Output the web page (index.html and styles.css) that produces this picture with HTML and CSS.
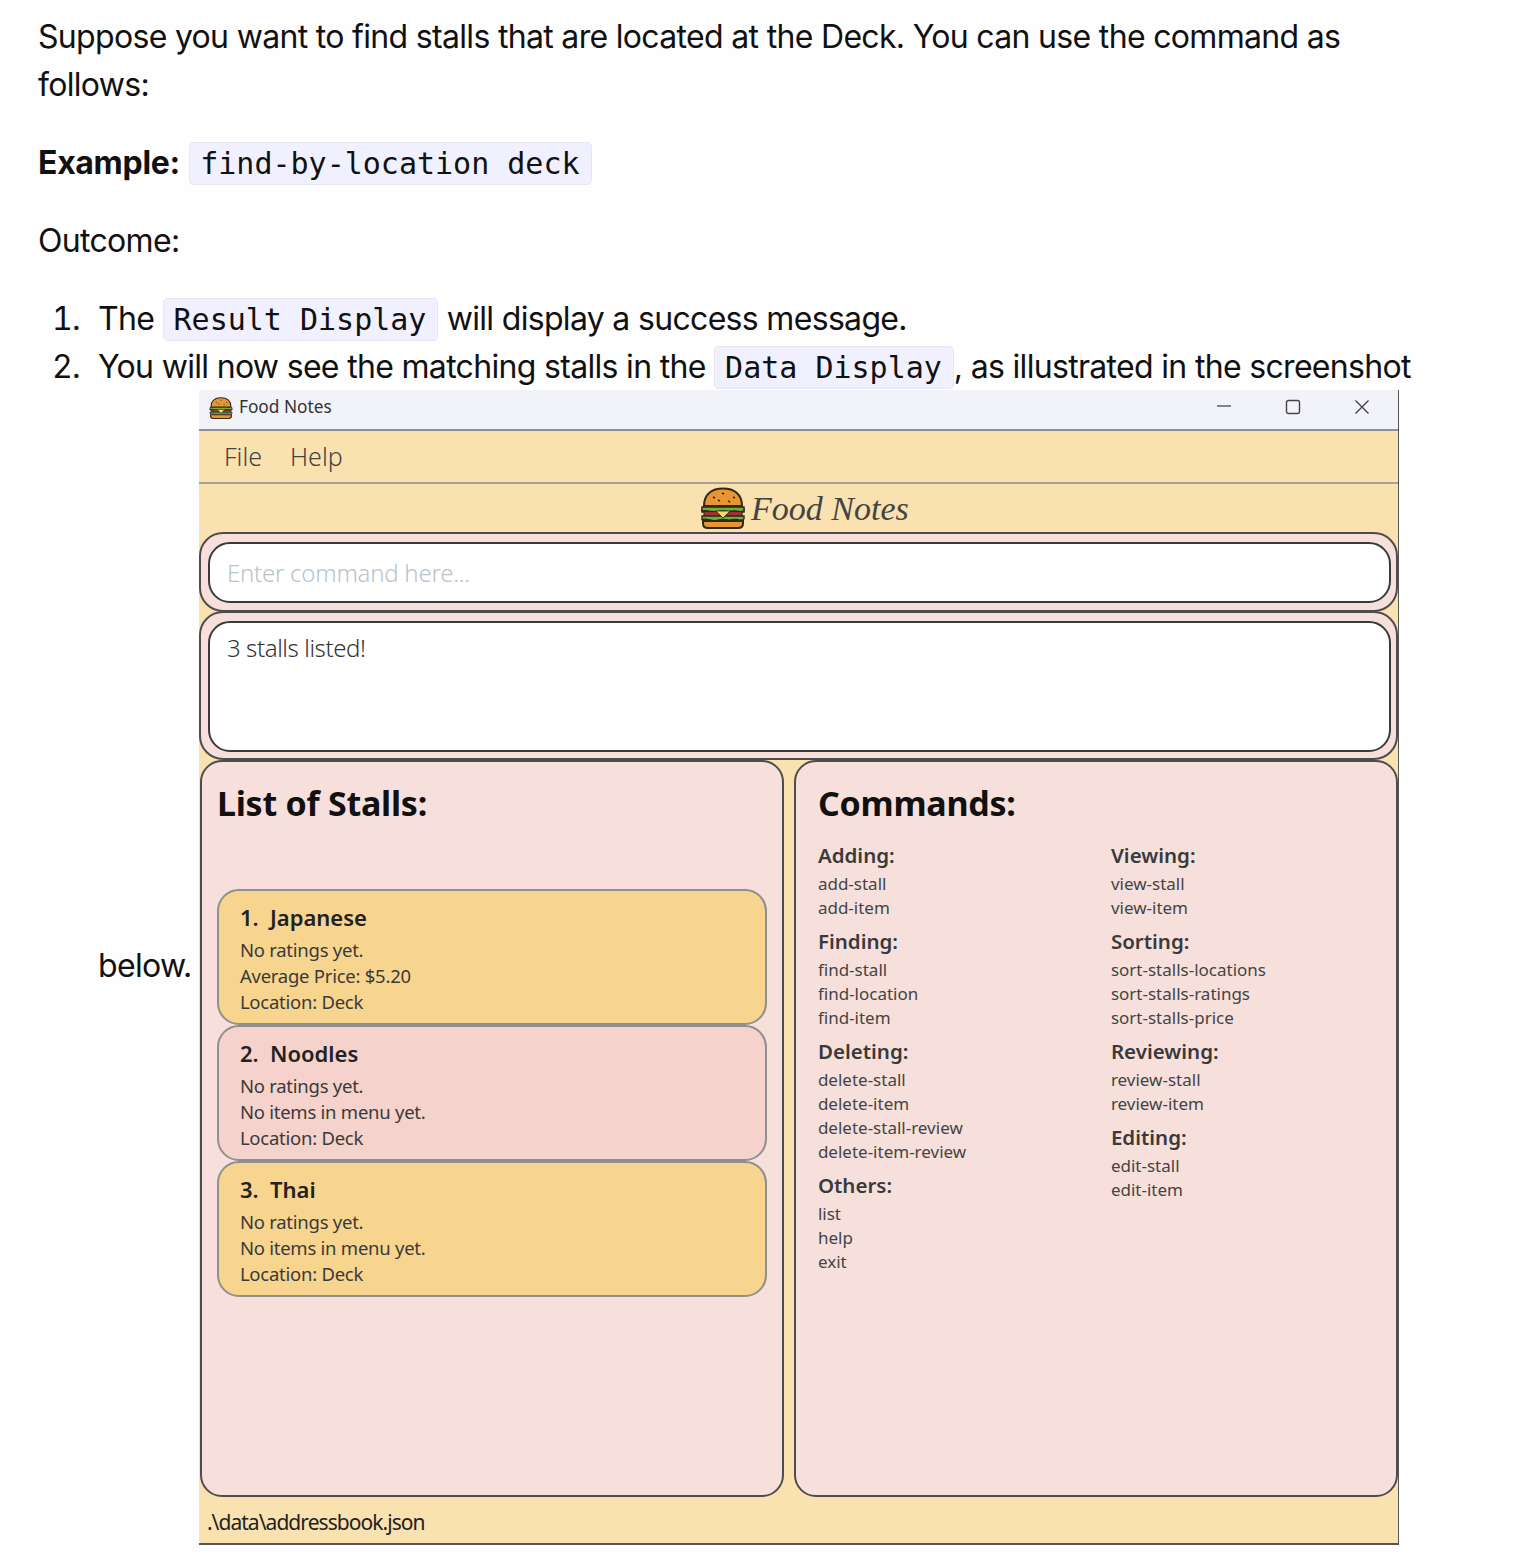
FILE: index.html
```html
<!DOCTYPE html>
<html lang="en">
<head>
<meta charset="utf-8">
<title>Food Notes guide</title>
<link rel="stylesheet" href="styles.css">
</head>
<body>
<svg class="defs" width="0" height="0" aria-hidden="true">
  <symbol id="burger" viewBox="0 0 46 42">
    <path d="M4 19C4 7 12 1.500 23 1.500S42 7 42 19z" fill="#e8962f" stroke="#33261a" stroke-width="2"/>
    <path d="M13 10l2 1M22 6l2 1M33 10l2 1M18 13l2 1M28 14l2 1" stroke="#33261a" stroke-width="1.600"/>
    <path d="M2 22c3-3 5-2 8-1s5 1 8 0 6-1 9 0 5 1 8 0 6-1 9 1v3H2z" fill="#b23338" stroke="#33261a" stroke-width="1.400"/>
    <path d="M2 20h42v4c-3 1.500-5 .5-8 0s-5 1-8 .5-6-1-9 0-6 1-9 0-5-1-8-.5z" fill="#69b23e" stroke="#33261a" stroke-width="1.400"/>
    <rect x="4" y="24.500" width="38" height="5" fill="#a82f36" stroke="#33261a" stroke-width="1.200"/>
    <path d="M2 29h42v3c-3 2-5 1-8 .5s-5 1-8 .5-6-1-9 0-6 1-9 0-5-1-8-.5z" fill="#69b23e" stroke="#33261a" stroke-width="1.400"/>
    <path d="M16 24h14l-7 7z" fill="#f8dc6b" stroke="#33261a" stroke-width=".8"/>
    <path d="M3 34h40v2.500c0 3-2 4.500-5 4.500H8c-3 0-5-1.500-5-4.500z" fill="#e8962f" stroke="#33261a" stroke-width="2"/>
  </symbol>
</svg>
<p class="para">Suppose you want to find stalls that are located at the Deck. You can use the command as follows:</p>
<p class="para"><strong>Example:</strong> <code class="code">find-by-location deck</code></p>
<p class="para">Outcome:</p>
<ol class="steps">
  <li>The <code class="code">Result Display</code> will display a success message.</li>
  <li>You will now see the matching stalls in the <code class="code">Data Display</code>, as illustrated in the screenshot below.
    <div class="window">
      <div class="titlebar">
        <svg class="title-icon"><use href="#burger"/></svg>
        <span class="title-text">Food Notes</span>
        <div class="win-controls">
          <svg class="win-btn" viewBox="0 0 16 16"><path d="M1 7h14" stroke="#555" stroke-width="1.400" fill="none"/></svg>
          <svg class="win-btn" viewBox="0 0 16 16"><rect x="1.500" y="1.500" width="13" height="13" rx="2" stroke="#444" stroke-width="1.400" fill="none"/></svg>
          <svg class="win-btn" viewBox="0 0 16 16"><path d="M1.500 1.500l13 13M14.500 1.500l-13 13" stroke="#444" stroke-width="1.400" fill="none"/></svg>
        </div>
      </div>
      <div class="menubar"><span>File</span><span>Help</span></div>
      <div class="logo-row">
        <svg class="logo-icon"><use href="#burger"/></svg>
        <span class="logo-text">Food Notes</span>
      </div>
      <div class="box box-command"><div class="field field-command">Enter command here...</div></div>
      <div class="box box-result"><div class="field field-result">3 stalls listed!</div></div>
      <div class="panels">
        <section class="panel">
          <h2 class="panel-title">List of Stalls:</h2>
          <div class="cards">
            <article class="card card-odd">
              <h3>1.&nbsp; Japanese</h3>
              <p>No ratings yet.</p><p>Average Price: $5.20</p><p>Location: Deck</p>
            </article>
            <article class="card card-even">
              <h3>2.&nbsp; Noodles</h3>
              <p>No ratings yet.</p><p>No items in menu yet.</p><p>Location: Deck</p>
            </article>
            <article class="card card-odd">
              <h3>3.&nbsp; Thai</h3>
              <p>No ratings yet.</p><p>No items in menu yet.</p><p>Location: Deck</p>
            </article>
          </div>
        </section>
        <section class="panel panel-commands">
          <h2 class="panel-title">Commands:</h2>
          <div class="cmd-grid">
            <div class="cmd-col">
              <div class="cmd-group"><h4>Adding:</h4><p>add-stall</p><p>add-item</p></div>
              <div class="cmd-group"><h4>Finding:</h4><p>find-stall</p><p>find-location</p><p>find-item</p></div>
              <div class="cmd-group"><h4>Deleting:</h4><p>delete-stall</p><p>delete-item</p><p>delete-stall-review</p><p>delete-item-review</p></div>
              <div class="cmd-group"><h4>Others:</h4><p>list</p><p>help</p><p>exit</p></div>
            </div>
            <div class="cmd-col">
              <div class="cmd-group"><h4>Viewing:</h4><p>view-stall</p><p>view-item</p></div>
              <div class="cmd-group"><h4>Sorting:</h4><p>sort-stalls-locations</p><p>sort-stalls-ratings</p><p>sort-stalls-price</p></div>
              <div class="cmd-group"><h4>Reviewing:</h4><p>review-stall</p><p>review-item</p></div>
              <div class="cmd-group"><h4>Editing:</h4><p>edit-stall</p><p>edit-item</p></div>
            </div>
          </div>
        </section>
      </div>
      <div class="statusbar">.\data\addressbook.json</div>
    </div>
  </li>
</ol>
</body>
</html>
```
FILE: styles.css
```css
* { box-sizing: border-box; }
html, body { margin: 0; padding: 0; }
body {
  padding: 13px 100px 0 38px;
  height: 1564px;
  overflow: hidden;
  background: #fefefe;
  color: #111;
  font-family: Inter, "Liberation Sans", sans-serif;
  font-size: 32px;
  line-height: 48px;
  letter-spacing: -0.68px;
}
.defs { position: absolute; }
.para { margin: 0 0 30px; }
.para strong { font-weight: 700; letter-spacing: -0.3px; }
.code {
  font-family: "DejaVu Sans Mono", monospace;
  font-size: 30px;
  line-height: 36px;
  letter-spacing: 0;
  padding: 3px 11px 3px 10px;
  margin: 0 1px;
  background: #f0f0fe;
  border: 1px solid #e7e7f4;
  border-radius: 5px;
}
.steps { margin: 0; padding: 0 0 0 60px; }
.steps .code { margin: 0; }
.steps li::marker { content: counter(list-item) ".\00a0\00a0\200a"; }
.window {
  display: inline-flex;
  flex-direction: column;
  vertical-align: middle;
  width: 1200px;
  height: 1155px;
  margin: -1px 0 0 -1px;
  background: #fae1b0;
  border-right: 1px solid #555;
  border-radius: 0 0 0 6px;
  font-family: "Noto Sans", "Open Sans", sans-serif;
  color: #222;
  line-height: 1.2;
  letter-spacing: 0;
}
.titlebar {
  display: flex;
  align-items: center;
  height: 41px;
  padding: 0 0 4px 10px;
  background: #f2f2f9;
  border-bottom: 2px solid #8f8f96;
  font-size: 17.300px;
  flex: none;
}
.title-icon { width: 24px; height: 22px; }
.title-text { margin-left: 6px; color: #333; }
.win-controls { margin: -2px 0 0 auto; display: flex; gap: 53px; padding-right: 28px; }
.win-btn { width: 16px; height: 16px; display: block; }
.menubar {
  display: flex;
  gap: 28px;
  align-items: center;
  height: 53px;
  padding: 0 0 2px 25px;
  border-bottom: 2px solid #a8a295;
  font-size: 25px;
  font-weight: 300;
  color: #444;
  flex: none;
}
.logo-row {
  display: flex;
  align-items: center;
  justify-content: center;
  gap: 5px;
  height: 48px;
  flex: none;
  padding: 3px 0 0 12px;
}
.logo-icon { width: 46px; height: 42px; margin-top: -3px; }
.logo-text {
  font-family: "Liberation Serif", serif;
  font-style: italic;
  font-size: 34px;
  color: #444;
}
.box {
  background: #f7e0dc;
  border: 2px solid #4d4d4d;
  border-radius: 24px;
  padding: 8px 5px 7px 7px;
  flex: none;
}
.box-command { height: 80px; }
.box-result { height: 149px; margin-top: -1px; padding-bottom: 6px; }
.field {
  height: 100%;
  background: #fff;
  border: 2px solid #3a3a3a;
  border-radius: 22px;
  padding-left: 17px;
  font-size: 24px;
  font-weight: 300;
}
.field-command { display: flex; align-items: center; padding-top: 2px; color: #b9c3c8; letter-spacing: -0.25px; }
.field-result { padding-top: 11px; color: #333; letter-spacing: -0.4px; }
.panels {
  display: grid;
  grid-template-columns: 584px 604px;
  gap: 10px;
  height: 737px;
  padding-left: 1px;
  flex: none;
}
.panel {
  background: #f7e0dc;
  border: 2px solid #4d4d4d;
  border-radius: 22px;
  padding: 18px 15px 0;
}
.panel-commands { padding-left: 22px; }
.panel-title { margin: 0 0 -1px; font-size: 34px; line-height: 46px; font-weight: 700; color: #111; letter-spacing: -0.25px; }
.cards { display: flex; flex-direction: column; margin-top: 64px; }
.card {
  height: 136px;
  border: 2px solid #8f8f8f;
  border-radius: 22px;
  padding: 11px 21px;
  color: #3a3a3a;
}
.card-odd { background: #f7d58f; }
.card-even { background: #f5d2cb; }
.card h3 { margin: 0 0 5px; font-size: 22px; line-height: 30px; font-weight: 600; color: #222; }
.card p { margin: 0; font-size: 18.500px; line-height: 26px; letter-spacing: -0.25px; }
.cmd-grid { display: grid; grid-template-columns: 293px 1fr; margin-top: 16px; }
.cmd-group { margin-bottom: 7px; }
.cmd-group h4 { margin: 0 0 3px; font-size: 20.500px; line-height: 28px; font-weight: 600; color: #3a3a3a; }
.cmd-group p { margin: 0; font-size: 17px; line-height: 24px; color: #444; }
.statusbar {
  flex: 1;
  display: flex;
  align-items: center;
  padding: 6px 0 0 8px;
  font-size: 21px;
  letter-spacing: -0.950px;
  color: #222;
  border-bottom: 2px solid #555;
}
```
